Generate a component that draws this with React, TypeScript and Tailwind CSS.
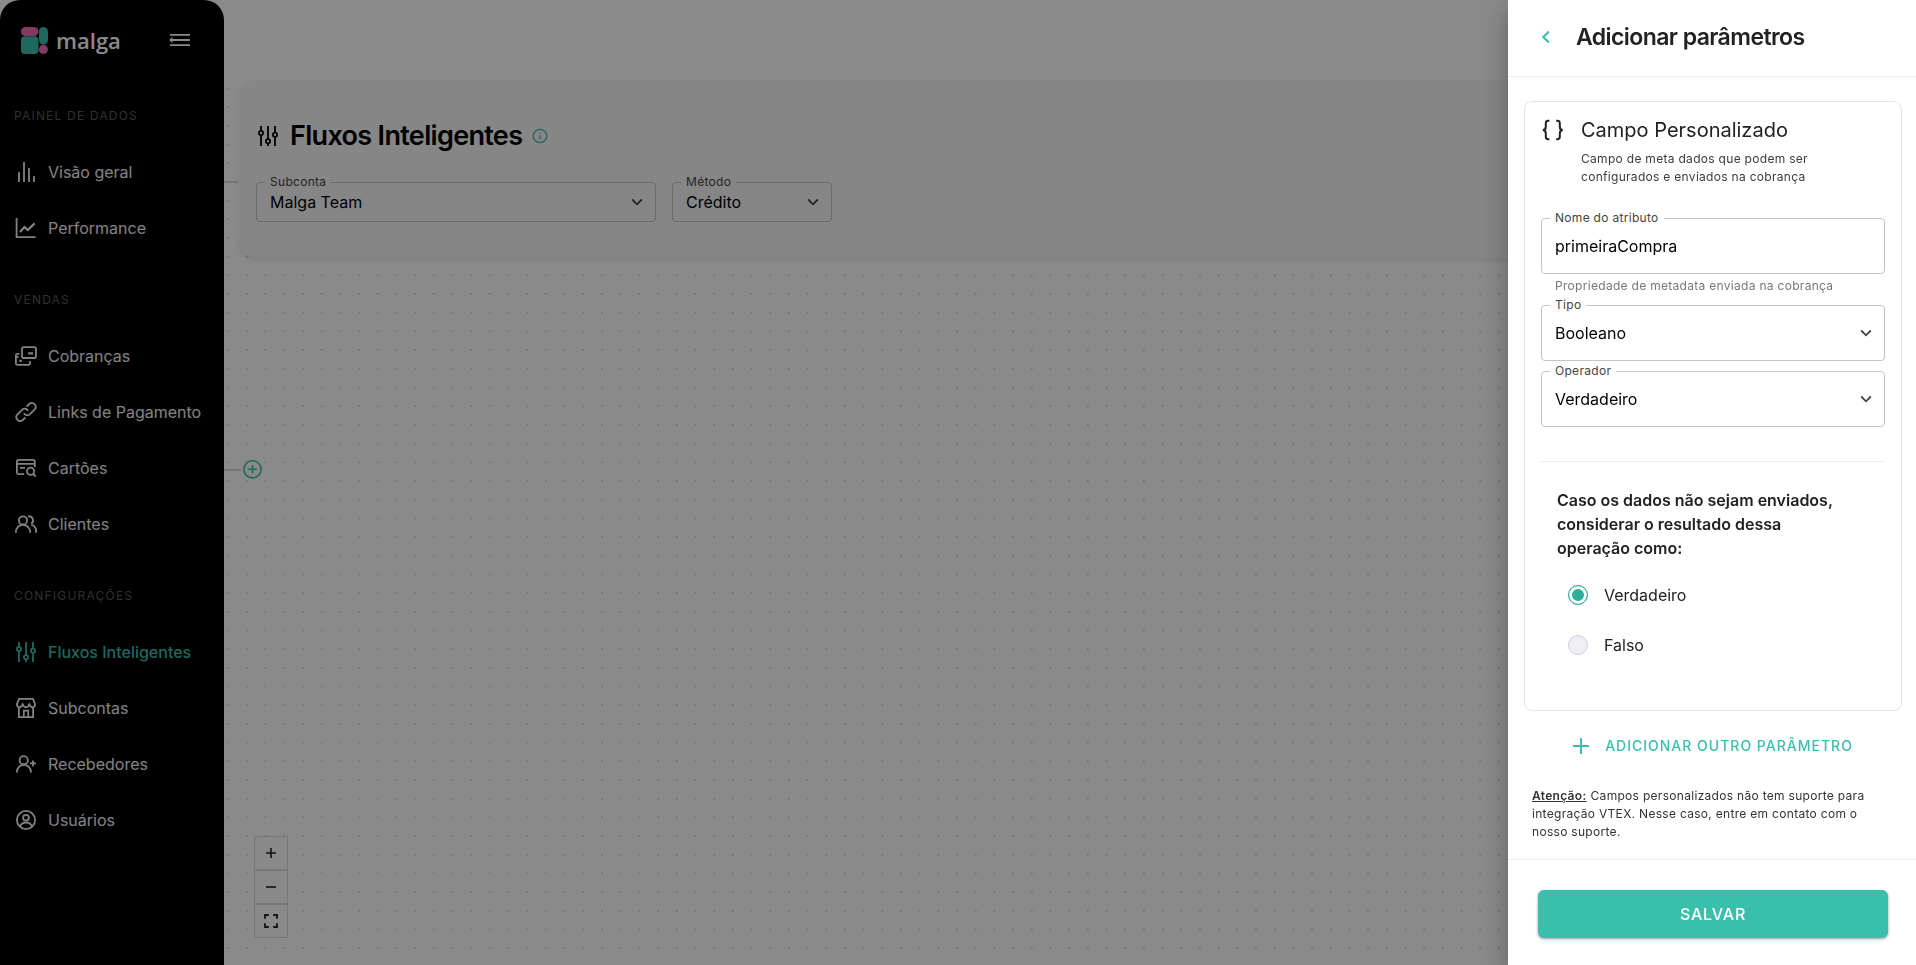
import React from "react";

type IconProps = { className?: string };

const Icon: React.FC<{ className?: string; children: React.ReactNode }> = ({ className = "size-6", children }) => (
  <svg viewBox="0 0 24 24" fill="none" stroke="currentColor" strokeWidth="1.8" className={`shrink-0 ${className}`} aria-hidden="true">
    {children}
  </svg>
);

const SlidersIcon: React.FC<IconProps> = ({ className }) => (
  <Icon className={className}>
    <path d="M5 2v4.6M5 11.4V22M12 2v13M12 19.6V22M19 2v6.4M19 13.2V22" />
    <circle cx="5" cy="9" r="2.1" />
    <circle cx="12" cy="17.3" r="2.1" />
    <circle cx="19" cy="10.8" r="2.1" />
  </Icon>
);

const BarsIcon = () => (
  <Icon><path d="M5 12v10M10 2v20M15 8v14M20 16v6" /></Icon>
);

const ChartIcon = () => (
  <Icon>
    <path d="M2.6 2v19.2h19" />
    <path d="M6 16l4.4-5 3.4 3 6.8-6.6" strokeWidth="2.2" />
  </Icon>
);

const ChargesIcon = () => (
  <Icon>
    <rect x="8" y="3.2" width="14" height="10.8" rx="1.8" />
    <path d="M5.4 9.9H3.4a1.5 1.5 0 0 0-1.5 1.5v8c0 .9.6 1.5 1.5 1.5h11c1 0 1.6-.6 1.6-1.5V17" />
    <path d="M14.2 9.4h4.8M2.4 13h2M5.4 16.9h2.4" strokeWidth="2.2" />
  </Icon>
);

const LinkIcon = () => (
  <Icon>
    <path d="M12.6 6.600l2.600-2.600a3.900 3.900 0 0 1 5.500 5.500l-4.700 4.700a3.900 3.900 0 0 1-5.500 0l-.8-.8" />
    <path d="M11.400 17.400l-2.600 2.600a3.900 3.900 0 0 1-5.500-5.500l4.700-4.700a3.900 3.900 0 0 1 5.500 0l.8.8" />
  </Icon>
);

const CardsIcon = () => (
  <Icon>
    <path d="M20.8 11V5.4c0-.9-.6-1.5-1.5-1.5H4.4c-.9 0-1.5.6-1.5 1.5v11.2c0 .9.6 1.5 1.5 1.5H10" />
    <path d="M3 7.8h18M6 11.8h5" />
    <circle cx="16.6" cy="15.2" r="3.6" />
    <path d="M19.2 17.9l2.4 2.6" strokeWidth="2" />
  </Icon>
);

const ClientsIcon = () => (
  <Icon>
    <circle cx="9" cy="8.4" r="4.1" />
    <path d="M1.9 20.8v-.9a7.1 7.1 0 0 1 14.2 0v.9M14 4.4a4.1 4.1 0 0 1 3.2 7.4M17.2 12.6a6.8 6.8 0 0 1 4.9 6.6v1.6" />
  </Icon>
);

const StoreIcon = () => (
  <Icon>
    <path d="M5 2.900h14l2.100 5.200c0 2-1.200 3.200-2.600 3.200s-2.500-1.300-3.200-2.900c-.7 1.600-1.900 2.900-3.300 2.900s-2.600-1.300-3.300-2.900c-.7 1.600-1.800 2.900-3.200 2.900s-2.600-1.200-2.600-3.200z" />
    <path d="M4.900 11v10.100h14.200V11M9.800 21v-6.400h4.400V21" />
  </Icon>
);

const UserPlusIcon = () => (
  <Icon>
    <circle cx="9.7" cy="8.2" r="4.1" />
    <path d="M2.900 20.400v-.6a6.900 6.900 0 0 1 14 0v.6M16 11.400h6M19 8.400v6" />
  </Icon>
);

const UserCircleIcon = () => (
  <Icon>
    <circle cx="12" cy="12" r="9.1" />
    <circle cx="12" cy="9.8" r="2.9" />
    <path d="M6 18.600c.9-2.600 3.200-4.100 6-4.100s5.100 1.500 6 4.100" />
  </Icon>
);

const Chevron: React.FC<IconProps> = ({ className = "size-3" }) => (
  <svg viewBox="0 0 12 12" fill="none" stroke="currentColor" strokeWidth="1.800" className={className} aria-hidden="true">
    <path d="M1.200 3.500l4.800 4.800 4.800-4.800" />
  </svg>
);

const Logo = () => (
  <div className="flex items-center gap-2">
    <svg width="27" height="27" viewBox="0 0 27 27" aria-hidden="true">
      <rect width="17.500" height="9" rx="4.500" fill="#f26bb4" />
      <rect y="9.200" width="17.500" height="17.800" rx="4" fill="#3bbfad" />
      <rect x="18" width="9" height="17.500" rx="4.500" fill="#3bbfad" />
      <circle cx="22.400" cy="22.400" r="4.600" fill="#f26bb4" />
    </svg>
    <span className="font-['Open_Sans',sans-serif] text-[22px] leading-8 font-semibold">malga</span>
  </div>
);

const sections = [
  {
    title: "Painel de dados",
    items: [
      { label: "Visão geral", icon: <BarsIcon /> },
      { label: "Performance", icon: <ChartIcon /> },
    ],
  },
  {
    title: "Vendas",
    items: [
      { label: "Cobranças", icon: <ChargesIcon /> },
      { label: "Links de Pagamento", icon: <LinkIcon /> },
      { label: "Cartões", icon: <CardsIcon /> },
      { label: "Clientes", icon: <ClientsIcon /> },
    ],
  },
  {
    title: "Configurações",
    items: [
      { label: "Fluxos Inteligentes", icon: <SlidersIcon />, active: true },
      { label: "Subcontas", icon: <StoreIcon /> },
      { label: "Recebedores", icon: <UserPlusIcon /> },
      { label: "Usuários", icon: <UserCircleIcon /> },
    ],
  },
];

const Sidebar = () => (
  <aside className="w-56 shrink-0 rounded-t-[20px] bg-black text-white">
    <div className="flex h-20 items-center justify-between pr-[34px] pl-[21px]">
      <Logo />
      <button type="button" aria-label="Recolher menu">
        <svg width="24" height="24" viewBox="0 0 24 24" fill="none" stroke="currentColor" strokeWidth="1.800">
          <path d="M4 6.800h20M4 12h20M4 17.200h20" />
          <path d="M3 12l3.400-3v6z" fill="currentColor" stroke="none" />
        </svg>
      </button>
    </div>
    <nav className="-mt-2">
      {sections.map((section) => (
        <div key={section.title} className="pt-4">
          <h2 className="flex h-14 items-center pl-3.5 text-xs tracking-widest text-[#5c5c5c] uppercase">{section.title}</h2>
          {section.items.map((item) => (
            <a
              key={item.label}
              href="#"
              className={`flex h-14 items-center gap-2.5 pl-3.5 text-base ${item.active ? "font-medium text-[#3bbfad]" : "text-[#f0f0f0]"}`}
            >
              {item.icon}
              {item.label}
            </a>
          ))}
        </div>
      ))}
    </nav>
  </aside>
);

type SelectFieldProps = { id: string; label: string; value: string; compact?: boolean; className?: string };

const SelectField: React.FC<SelectFieldProps> = ({ id, label, value, compact, className = "" }) => (
  <div className={`relative ${className}`}>
    <label htmlFor={id} className={`absolute -top-2 left-[9px] px-[5px] text-xs leading-4 tracking-wide text-[#444] ${compact ? "bg-[#f8f8f8]" : "bg-white"}`}>
      {label}
    </label>
    <select
      id={id}
      defaultValue={value}
      className={`w-full appearance-none rounded border border-[#c4c4c4] bg-transparent pr-10 pl-[13px] text-base text-black ${compact ? "h-10" : "h-14"}`}
    >
      <option>{value}</option>
    </select>
    <Chevron className="pointer-events-none absolute inset-y-0 right-[13px] my-auto size-3 text-[#444]" />
  </div>
);

const Canvas = () => (
  <div className="absolute inset-0">
    <svg className="size-full" aria-hidden="true">
      <defs>
        <pattern id="dots" x="3.200" y="87.500" width="18.690" height="18.690" patternUnits="userSpaceOnUse">
          <circle cx="0.900" cy="0.900" r="0.600" fill="#81818a" />
        </pattern>
      </defs>
      <rect width="100%" height="100%" fill="url(#dots)" />
      <path d="M0 182h20M0 470h17" stroke="#dadada" strokeWidth="2" />
      <circle cx="28.500" cy="469.300" r="8.600" fill="none" stroke="#3bbfad" strokeWidth="1.600" />
      <path d="M28.500 465v8.600M24.200 469.300h8.600" stroke="#3bbfad" strokeWidth="1.600" />
    </svg>
    <div className="absolute bottom-[27px] left-[30px] flex w-[34px] flex-col">
      <button type="button" aria-label="Aproximar" className="flex h-[34px] items-center justify-center border border-[#dcdcdc] bg-[#fdfdfd]">
        <svg width="12" height="12" viewBox="0 0 12 12" stroke="#222" strokeWidth="1.600"><path d="M6 1v10M1 6h10" /></svg>
      </button>
      <button type="button" aria-label="Afastar" className="flex h-[34px] items-center justify-center border border-[#dcdcdc] bg-[#fdfdfd]">
        <svg width="12" height="12" viewBox="0 0 12 12" stroke="#222" strokeWidth="1.600"><path d="M1 6h10" /></svg>
      </button>
      <button type="button" aria-label="Ajustar à tela" className="flex h-[34px] items-center justify-center border border-[#dcdcdc] bg-[#fdfdfd]">
        <svg width="14" height="14" viewBox="0 0 14 14" fill="none" stroke="#222" strokeWidth="1.800"><path d="M1 4.800V1h3.800M9.200 1H13v3.800M13 9.200V13H9.200M4.800 13H1V9.200" /></svg>
      </button>
    </div>
  </div>
);

const Drawer = () => (
  <aside className="fixed inset-y-0 right-0 flex w-[408px] flex-col overflow-y-auto bg-white text-[#222] shadow-[0_8px_10px_-5px_rgba(0,0,0,0.2),0_16px_24px_2px_rgba(0,0,0,0.14),0_6px_30px_5px_rgba(0,0,0,0.12)]">
    <header className="flex h-[77px] shrink-0 items-center gap-5 border-b border-[#ebebeb] pb-0.5 pl-7">
      <button type="button" aria-label="Voltar" className="flex w-5 justify-center text-[#3bbfad]">
        <Chevron className="size-[14px] rotate-90" />
      </button>
      <h2 className="text-[23px] font-semibold tracking-tight">Adicionar parâmetros</h2>
    </header>
    <div className="flex-1 pt-6 pr-3.5 pl-4">
      <section className="h-[610px] rounded-lg border border-[#e4e4e4] px-4 pt-3">
        <div className="flex gap-4">
          <svg viewBox="0 0 24 24" className="mt-1 size-6 shrink-0" fill="none" stroke="currentColor" strokeWidth="2" aria-hidden="true">
            <path d="M8.400 2.800H7.200C5.600 2.800 4.800 3.600 4.800 5.200v3.200C4.800 10.400 4 12 1.800 12 4 12 4.800 13.600 4.800 15.600v3.200c0 1.600.8 2.400 2.400 2.400h1.200M15.200 2.800h1.200c1.600 0 2.400.8 2.400 2.400v3.200c0 2 .8 3.600 3 3.600-2.200 0-3 1.600-3 3.600v3.200c0 1.600-.8 2.400-2.400 2.400h-1.200" />
          </svg>
          <div>
            <h3 className="text-xl leading-8">Campo Personalizado</h3>
            <p className="mt-1 w-60 text-xs leading-[18px] tracking-wide text-[#3c3c3c]">Campo de meta dados que podem ser configurados e enviados na cobrança</p>
          </div>
        </div>
        <div className="relative mt-8">
          <label htmlFor="atributo" className="absolute -top-2 left-[9px] bg-white px-[5px] text-xs leading-4 tracking-wide text-[#444]">Nome do atributo</label>
          <input id="atributo" defaultValue="primeiraCompra" className="h-14 w-full rounded border border-[#c4c4c4] px-[13px] text-base text-black" />
          <p className="mt-1 pl-3.5 text-xs leading-4 tracking-wide text-[#777]">Propriedade de metadata enviada na cobrança</p>
        </div>
        <SelectField id="tipo" label="Tipo" value="Booleano" className="mt-[11px]" />
        <SelectField id="operador" label="Operador" value="Verdadeiro" className="mt-2.5" />
        <fieldset className="mt-[34px] border-t border-[#ebebeb] pt-[26px] pl-4">
          <p className="w-72 text-base font-semibold">Caso os dados não sejam enviados, considerar o resultado dessa operação como:</p>
          <div className="mt-2.5 ml-[11px]">
            <label className="flex h-[50px] items-center gap-4">
              <input type="radio" name="resultado" defaultChecked className="size-5 appearance-none rounded-full border border-[#c9cfe4] bg-[#eeeef3] checked:border-[#30ad9b] checked:bg-[#30ad9b] checked:shadow-[inset_0_0_0_3px_white]" />
              Verdadeiro
            </label>
            <label className="flex h-[50px] items-center gap-4">
              <input type="radio" name="resultado" className="size-5 appearance-none rounded-full border border-[#c9cfe4] bg-[#eeeef3] checked:border-[#30ad9b] checked:bg-[#30ad9b] checked:shadow-[inset_0_0_0_3px_white]" />
              Falso
            </label>
          </div>
        </fieldset>
      </section>
      <button type="button" className="mx-auto mt-[23px] flex items-center gap-4 text-sm leading-6 font-medium tracking-[1px] text-[#3bbfad] uppercase">
        <svg width="16" height="16" viewBox="0 0 16 16" stroke="currentColor" strokeWidth="2" aria-hidden="true"><path d="M8 0v16M0 8h16" /></svg>
        Adicionar outro parâmetro
      </button>
      <p className="mt-[29px] pr-4 pl-2 text-xs leading-[18px] tracking-wide text-[#333]">
        <strong className="mr-1 font-semibold underline">Atenção:</strong>Campos personalizados não tem suporte para integração VTEX. Nesse caso, entre em contato com o nosso suporte.
      </p>
    </div>
    <footer className="h-[106px] shrink-0 border-t border-[#ebebeb] pt-[30px] pr-7 pl-[30px]">
      <button type="button" className="mx-auto block h-12 w-full rounded-md bg-[#3bbfad] text-base font-medium tracking-wider text-white shadow-[0_1px_3px_rgba(0,0,0,0.4)]">SALVAR</button>
    </footer>
  </aside>
);

export default function App() {
  return (
    <div className="flex min-h-screen overflow-hidden bg-white font-[Inter,sans-serif]">
      <Sidebar />
      <main className="relative flex-1">
        <Canvas />
        <div className="relative h-20 bg-white" />
        <section className="relative ml-3.5 h-[178px] rounded-l-[20px] bg-[#f8f8f8] px-[18px] pt-8 shadow-[0_3px_4px_rgba(0,0,0,0.08)]">
          <div className="flex h-12 items-center">
            <SlidersIcon className="size-6" />
            <h1 className="ml-2.5 text-[27px] font-semibold tracking-tight">Fluxos Inteligentes</h1>
            <svg viewBox="0 0 16 16" className="ml-2.5 size-4" fill="none" stroke="#3bbfad" strokeWidth="1.300" role="img" aria-label="Informações">
              <circle cx="8" cy="8" r="6.700" />
              <path d="M8 7.300v3.700M8 4.800v1.300" />
            </svg>
          </div>
          <div className="mt-[22px] flex gap-4">
            <SelectField id="subconta" label="Subconta" value="Malga Team" compact className="w-[400px]" />
            <SelectField id="metodo" label="Método" value="Crédito" compact className="w-40" />
          </div>
        </section>
      </main>
      <div className="fixed inset-0 bg-black/46" />
      <Drawer />
    </div>
  );
}
